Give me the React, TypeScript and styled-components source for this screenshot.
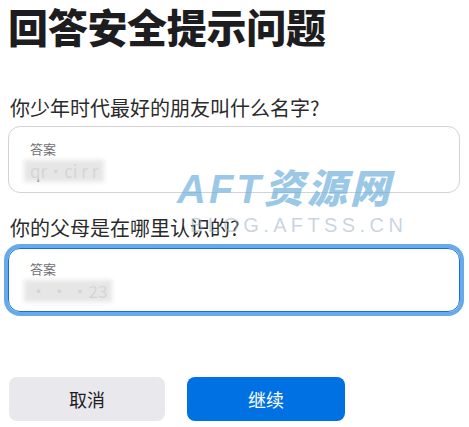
import React, { ReactElement } from 'react'
import styled, { createGlobalStyle } from 'styled-components'

const GlobalStyle = createGlobalStyle`
  *, *::before, *::after {
    box-sizing: border-box;
  }
  html, body {
    margin: 0;
    padding: 0;
    background: #ffffff;
    font-family: "Noto Sans CJK SC", "Noto Sans", sans-serif;
    color: #1d1d1f;
  }
`

const Page = styled.div`
  position: relative;
  width: 469px;
  height: 427px;
  padding: 0 9px 0 8px;
  overflow: hidden;
`

const Title = styled.h1`
  margin: 0;
  font-size: 40px;
  line-height: 52px;
  font-weight: 900;
  letter-spacing: -0.3px;
  color: #1d1d1f;
`

const Form = styled.div`
  display: flex;
  flex-direction: column;
  margin-top: 42px;
`

const Question = styled.div`
  font-size: 20px;
  line-height: 28px;
  color: #2a2a2c;
  padding-left: 2px;
`

const Field = styled.div<{ $focused?: boolean }>`
  margin-top: ${p => (p.$focused ? '6px' : '4px')};
  height: ${p => (p.$focused ? '64px' : '67px')};
  border: 1px solid ${p => (p.$focused ? '#1e6fc7' : '#d2d2d7')};
  border-radius: 12px;
  padding: ${p => (p.$focused ? '11px' : '13px')} 20px 0 21px;
  display: flex;
  flex-direction: column;
  box-shadow: ${p => (p.$focused ? '0 0 0 4px rgba(0, 113, 227, 0.6)' : 'none')};
  margin-bottom: ${p => (p.$focused ? '0' : '21px')};
`

const FieldLabel = styled.span`
  font-size: 13px;
  line-height: 18px;
  color: #6e6e73;
`

const FieldValue = styled.span`
  position: relative;
  margin-top: 2px;
  font-size: 17px;
  line-height: 22px;
  color: #1d1d1f;
  align-self: flex-start;
`

const Mask = styled.span<{ $w: number }>`
  position: absolute;
  left: -6px;
  top: 0;
  width: ${p => p.$w}px;
  height: 22px;
  background: #e4e4e4;
  filter: blur(2px);
  opacity: 0.92;
`

const Buttons = styled.div`
  display: flex;
  gap: 22px;
  margin-top: 65px;
  padding-left: 1px;
`

const Button = styled.button<{ $primary?: boolean }>`
  width: ${p => (p.$primary ? '158px' : '156px')};
  height: 44px;
  border: 0;
  border-radius: 8px;
  font-family: "Noto Sans CJK SC", sans-serif;
  font-size: 18px;
  cursor: pointer;
  background: ${p => (p.$primary ? '#0071e3' : '#e8e8ed')};
  color: ${p => (p.$primary ? '#ffffff' : '#1d1d1f')};
`

const Watermark = styled.div`
  position: absolute;
  left: 177px;
  top: 164px;
  display: flex;
  flex-direction: column;
  pointer-events: none;
`

const MarkBig = styled.span`
  font-family: "Liberation Sans", "Noto Sans CJK SC", sans-serif;
  font-size: 40px;
  line-height: 50px;
  font-weight: 900;
  font-style: italic;
  letter-spacing: 3px;
  color: rgba(110, 175, 220, 0.7);
`

const MarkSmall = styled.span`
  margin-left: 13px;
  font-family: "Liberation Sans", sans-serif;
  font-size: 20px;
  line-height: 22px;
  letter-spacing: 4.4px;
  color: rgba(150, 170, 190, 0.5);
`

export default function App(): ReactElement {
  return (
    <Page>
      <GlobalStyle />
      <Title>回答安全提示问题</Title>
      <Form>
        <Question>你少年时代最好的朋友叫什么名字?</Question>
        <Field>
          <FieldLabel>答案</FieldLabel>
          <FieldValue>
            qr·ci r r<Mask $w={80} />
          </FieldValue>
        </Field>
        <Question>你的父母是在哪里认识的?</Question>
        <Field $focused>
          <FieldLabel>答案</FieldLabel>
          <FieldValue>
            ·  ·    ·23<Mask $w={88} />
          </FieldValue>
        </Field>
      </Form>
      <Buttons>
        <Button>取消</Button>
        <Button $primary>继续</Button>
      </Buttons>
      <Watermark>
        <MarkBig>AFT资源网</MarkBig>
        <MarkSmall>BLOG.AFTSS.CN</MarkSmall>
      </Watermark>
    </Page>
  )
}
